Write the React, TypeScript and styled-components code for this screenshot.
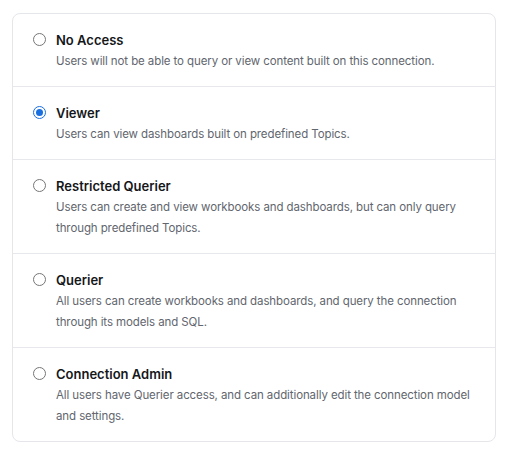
import { useState } from "react";
import styled, { createGlobalStyle } from "styled-components";

// ----- Global -----

const GlobalStyle = createGlobalStyle`
  html, body {
    margin: 0;
    padding: 0;
    background: #ffffff;
  }
  body {
    font-family: Inter, "Noto Sans", "Liberation Sans", sans-serif;
    -webkit-font-smoothing: antialiased;
  }
`;

// ----- Styled parts -----

const Page = styled.div`
  padding: 13px 15px 12px 12px;
`;

const Card = styled.div`
  width: 482px;
  border: 1px solid #e4e6ea;
  border-radius: 8px;
  background: #ffffff;
  overflow: hidden;
`;

const Option = styled.label`
  display: flex;
  align-items: flex-start;
  gap: 10px;
  padding: 16px 20px 14px 20px;
  cursor: pointer;

  & + & {
    border-top: 1px solid #e7e8eb;
  }
`;

const Radio = styled.span<{ $checked: boolean }>`
  flex: 0 0 auto;
  box-sizing: border-box;
  width: 13px;
  height: 13px;
  margin-top: 3px;
  border-radius: 50%;
  border: 1px solid ${(p) => (p.$checked ? "#1a6fe0" : "#767676")};
  background: #ffffff;
  display: flex;
  align-items: center;
  justify-content: center;

  &::after {
    content: "";
    width: 7px;
    height: 7px;
    border-radius: 50%;
    background: #1a6fe0;
    display: ${(p) => (p.$checked ? "block" : "none")};
  }
`;

const Body = styled.div`
  display: flex;
  flex-direction: column;
  gap: 1px;
`;

const Title = styled.div`
  font-size: 13px;
  line-height: 20px;
  font-weight: 600;
  color: #15171a;
`;

const Desc = styled.div`
  font-size: 11.5px;
  line-height: 21px;
  letter-spacing: -0.1px;
  color: #62666e;
`;

// ----- Data -----

const options = [
  {
    id: "none",
    title: "No Access",
    desc: "Users will not be able to query or view content built on this connection.",
  },
  {
    id: "viewer",
    title: "Viewer",
    desc: "Users can view dashboards built on predefined Topics.",
  },
  {
    id: "restricted",
    title: "Restricted Querier",
    desc: "Users can create and view workbooks and dashboards, but can only query through predefined Topics.",
  },
  {
    id: "querier",
    title: "Querier",
    desc: "All users can create workbooks and dashboards, and query the connection through its models and SQL.",
  },
  {
    id: "admin",
    title: "Connection Admin",
    desc: "All users have Querier access, and can additionally edit the connection model and settings.",
  },
];

// ----- App -----

export default function App() {
  const [selected, setSelected] = useState("viewer");

  return (
    <>
      <GlobalStyle />
      <Page>
        <Card role="radiogroup">
          {options.map((o) => (
            <Option key={o.id} onClick={() => setSelected(o.id)}>
              <Radio $checked={selected === o.id} role="radio" aria-checked={selected === o.id} />
              <Body>
                <Title>{o.title}</Title>
                <Desc>{o.desc}</Desc>
              </Body>
            </Option>
          ))}
        </Card>
      </Page>
    </>
  );
}
